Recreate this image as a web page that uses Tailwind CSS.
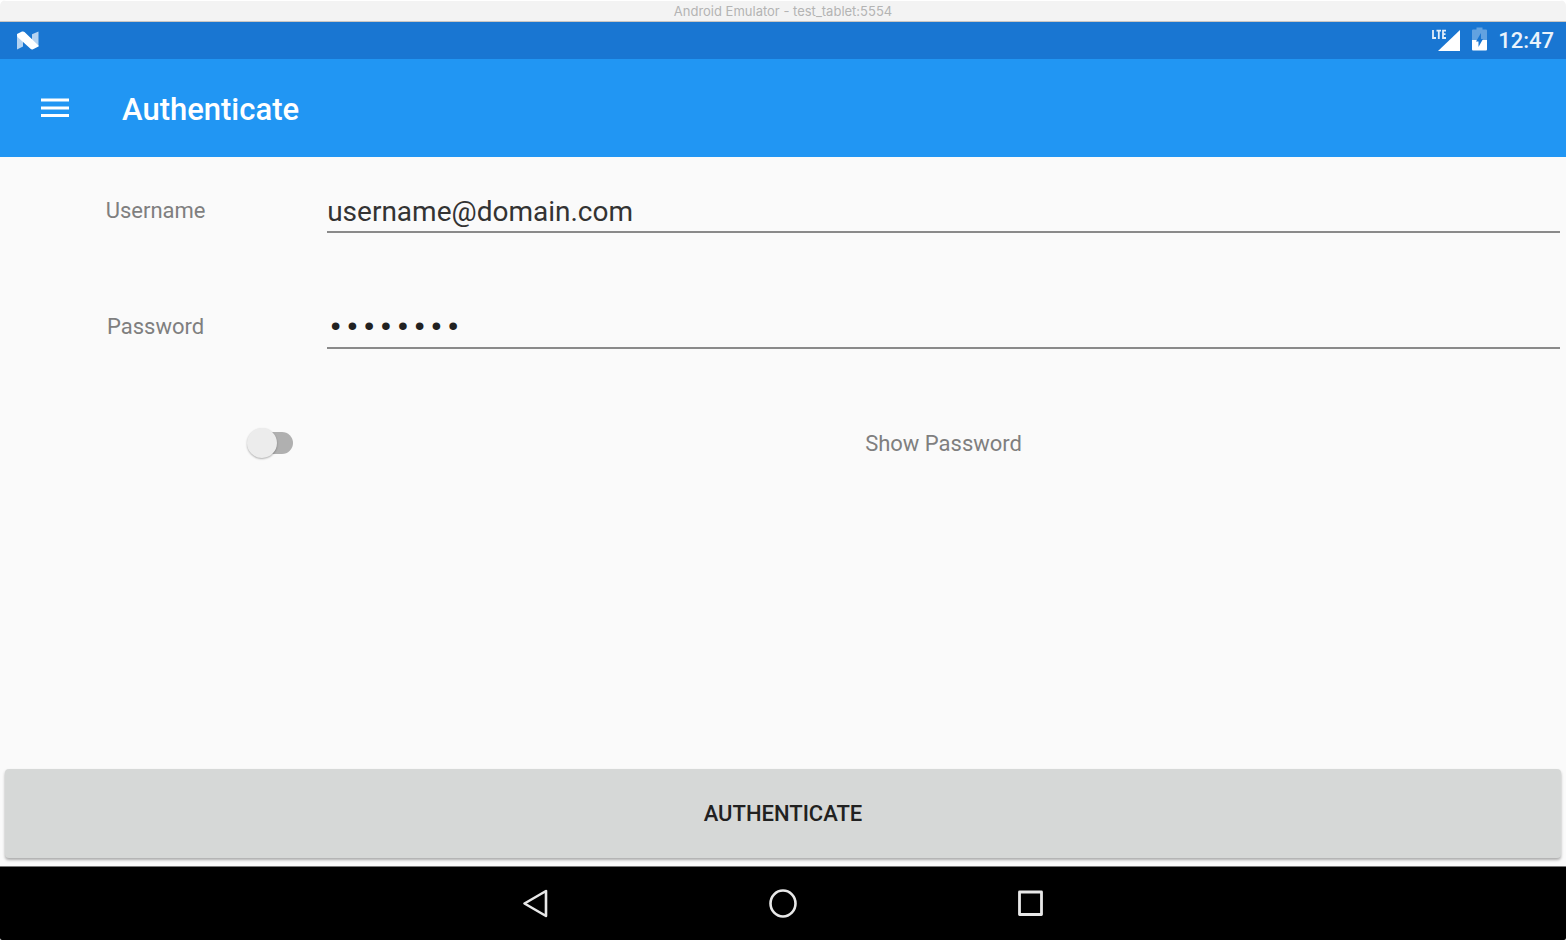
<!DOCTYPE html>
<html lang="en">
<head>
<meta charset="utf-8">
<meta name="viewport" content="width=device-width, initial-scale=1">
<title>Android Emulator - test_tablet:5554</title>
<script src="https://cdn.jsdelivr.net/npm/@tailwindcss/browser@4"></script>
</head>
<body class="bg-white font-['Roboto',sans-serif]">
<div class="flex min-h-screen flex-col overflow-hidden rounded-t-md rounded-b-xs bg-[#fafafa]">
  <header class="flex h-[22px] items-center justify-center border-t border-b border-t-white border-b-[#c9c6c2] bg-[#f3f3f3] font-['Inter',sans-serif] text-[13px] leading-5 text-[#b4b4b4]">Android Emulator - test_tablet:5554</header>

  <div class="flex h-[37px] items-center justify-between bg-[#1976d2] pr-3 pl-4 text-white">
    <svg class="h-[19px] w-[23px]" viewBox="0 0 23 19" aria-hidden="true">
      <path d="M1 3 7 6v9.500l-6 3zM16 3.200l6.500-2.700V15.500L16 12z" fill="#fff" fill-opacity=".68"/>
      <path d="M1 3 6 .6Q7.500 0 8.500 1L22.500 14.500v1L17 18.300Q15.500 18.800 14.500 17.800L1.500 6Q1 5 1 3z" fill="#fff"/>
    </svg>
    <div class="flex items-center">
      <svg class="h-[24px] w-[29px]" viewBox="0 0 29 24" role="img" aria-label="LTE signal">
        <path d="M29 1v21H7z" fill="#fff"/>
        <path d="M2 1v8h3M5.500 1.700h4.500M7.800 1.700V10M15 1.700h-3V9h3M12 5.200h2.500" fill="none" stroke="#1976d2" stroke-width="4"/>
        <path d="M2 1v8h3M5.500 1.700h4.500M7.800 1.700V10M15 1.700h-3V9h3M12 5.200h2.500" fill="none" stroke="#e1edf9" stroke-width="1.800"/>
      </svg>
      <svg class="ml-3 h-[28px] w-[15px]" viewBox="0 -2 15 28" role="img" aria-label="Battery charging">
        <path d="M4.500 -1.500h6v2H14a1 1 0 0 1 1 1V11H0V1.500a1 1 0 0 1 1-1h3.500z" fill="#fff" fill-opacity=".32"/>
        <path d="M0 11h15v9.500a1 1 0 0 1-1 1H1a1 1 0 0 1-1-1z" fill="#fff"/>
        <path d="M9 4 4 12.500h2.500V18l4.500-8H9z" fill="#1976d2"/>
      </svg>
      <time class="ml-[11px] text-[22px] leading-6 font-medium text-[#eaf3fb]">12:47</time>
    </div>
  </div>

  <div class="flex h-[98px] items-center bg-[#2196f3] pl-[41px] text-white">
    <button type="button" aria-label="Open menu" class="flex h-10 w-7 items-center">
      <svg class="h-5 w-7" viewBox="0 0 28 20" aria-hidden="true"><path d="M0 2h28M0 10h28M0 17.500h28" stroke="#fff" stroke-width="3"/></svg>
    </button>
    <h1 class="ml-[53px] pt-1 text-[31px] leading-9 font-medium">Authenticate</h1>
  </div>

  <form class="flex flex-1 flex-col">
    <div class="grid grid-cols-[1fr_4fr] gap-x-[10px] gap-y-[10px] text-[22px] text-[#7f7f7f]">
      <label for="username" class="flex h-[106px] items-center justify-center">Username</label>
      <div class="flex h-[106px] items-center px-1.5">
        <input id="username" type="text" value="username@domain.com" class="h-[46px] w-full border-b-2 border-[#8a8a8a] pt-1 text-[28px] text-[#333] outline-none">
      </div>
      <label for="password" class="flex h-[106px] items-center justify-center">Password</label>
      <div class="flex h-[106px] items-center px-1.5">
        <input id="password" type="password" value="password" class="h-[46px] w-full border-b-2 border-[#8a8a8a] pt-1 font-['Liberation_Mono',monospace] text-[28px] text-[#212121] outline-none">
      </div>
      <div class="flex h-[108px] items-center justify-end pr-[18px]">
        <input id="show" type="checkbox" role="switch" class="flex h-[22px] w-[46px] appearance-none items-center rounded-full bg-[linear-gradient(to_right,transparent_16px,#b0b0b0_16px)] before:size-[30px] before:shrink-0 before:rounded-full before:bg-[#ececec] before:shadow-[0_1px_2px_rgba(0,0,0,0.3)] before:content-['']">
      </div>
      <label for="show" class="flex h-[108px] items-center justify-center">Show Password</label>
    </div>
    <div class="mt-auto px-[5px] pb-2">
      <button type="submit" class="h-[89px] w-full rounded-sm bg-[#d6d8d7] text-[22px] font-medium text-[#212121] shadow-[0_2px_3px_rgba(0,0,0,0.32)]">AUTHENTICATE</button>
    </div>
  </form>

  <nav class="flex h-[74px] items-center justify-center gap-[216px] border-t border-[#777] bg-black">
    <button type="button" aria-label="Back" class="size-8"><svg viewBox="0 0 32 32" fill="none" stroke="#e8e8e8" stroke-width="2.600" stroke-linejoin="round" aria-hidden="true"><path d="M27 3v25L5.500 15.500z"/></svg></button>
    <button type="button" aria-label="Home" class="size-8"><svg viewBox="0 0 32 32" fill="none" stroke="#e8e8e8" stroke-width="2.600" aria-hidden="true"><ellipse cx="16" cy="15.500" rx="12.500" ry="13"/></svg></button>
    <button type="button" aria-label="Recent apps" class="size-8"><svg viewBox="0 0 32 32" fill="none" stroke="#e8e8e8" stroke-width="2.800" stroke-linejoin="round" aria-hidden="true"><path d="M4.500 4h22v22.500h-22z"/></svg></button>
  </nav>
</div>
</body>
</html>
